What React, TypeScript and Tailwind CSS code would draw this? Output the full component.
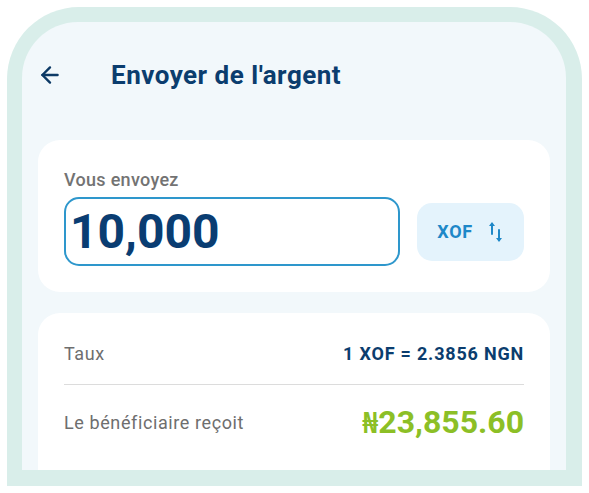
import { ArrowLeft } from 'lucide-react';

function SwapIcon() {
  return (
    <svg width="16" height="22" viewBox="0 0 16 22" fill="none" className="text-[#1e88c8]">
      {/* up arrow on the left, down arrow on the right */}
      <path d="M4 13V3" stroke="currentColor" strokeWidth="2" strokeLinecap="round" />
      <path d="M1 5 L4 1 L7 5 Z" fill="currentColor" />
      <path d="M11 9V19" stroke="currentColor" strokeWidth="2" strokeLinecap="round" />
      <path d="M8 17 L11 21 L14 17 Z" fill="currentColor" />
    </svg>
  );
}

export default function App() {
  return (
    <div className="w-[589px] h-[493px] bg-white pt-[7px] px-[7px] overflow-hidden font-['Roboto',sans-serif]">
      {/* Phone frame */}
      <div className="h-[479px] bg-[#d9eeea] rounded-t-[72px] pt-[15px] pl-[15px] pr-[16px] pb-[16px]">
        {/* Screen */}
        <div className="h-[448px] bg-[#f2f8fb] rounded-t-[56px] px-[16px] overflow-hidden flex flex-col">
          {/* Header */}
          <div className="mt-[37px] h-[32px] flex items-center">
            <ArrowLeft size={26} strokeWidth={2.2} className="text-[#0d3a66] -ml-[1px]" />
            <h1 className="ml-[48px] text-[26px] font-bold tracking-[0.5px] text-[#0b3d6e] leading-none">
              Envoyer de l'argent
            </h1>
          </div>

          {/* Amount card */}
          <div className="mt-[49px] bg-white rounded-[22px] px-[26px] pt-[29px] pb-[26px]">
            <p className="text-[18px] font-medium tracking-[0.3px] text-[#737373] leading-[22px]">Vous envoyez</p>
            <div className="mt-[6px] flex items-center gap-[17px]">
              <div className="w-[336px] h-[69px] border-2 border-[#2e97cc] rounded-[15px] flex items-center px-[4px]">
                <span className="text-[48px] font-bold text-[#0a3d72] leading-none">10,000</span>
              </div>
              <button className="w-[107px] h-[58px] bg-[#e4f3fc] rounded-[15px] flex items-center justify-center gap-[15px]">
                <span className="text-[18px] font-bold tracking-[0.6px] text-[#1e88c8] leading-none">XOF</span>
                <SwapIcon />
              </button>
            </div>
          </div>

          {/* Rate card */}
          <div className="mt-[21px] flex-1 bg-white rounded-t-[22px] px-[26px] pt-[29px]">
            <div className="flex items-center justify-between h-[22px]">
              <span className="text-[18px] tracking-[0.6px] text-[#6e6e6e]">Taux</span>
              <span className="text-[18px] font-bold tracking-[0.8px] text-[#0b3d6e]">1 XOF = 2.3856 NGN</span>
            </div>
            <div className="mt-[20px] border-t border-[#dcdcdc]" />
            <div className="mt-[18px] flex items-center justify-between h-[38px]">
              <span className="text-[18px] tracking-[0.6px] text-[#6e6e6e]">Le bénéficiaire reçoit</span>
              <span className="text-[32px] font-bold text-[#8cbf26] leading-none">
                <span className="font-['Noto_Sans',sans-serif] text-[28px]">₦</span>23,855.60
              </span>
            </div>
          </div>
        </div>
      </div>
    </div>
  );
}
